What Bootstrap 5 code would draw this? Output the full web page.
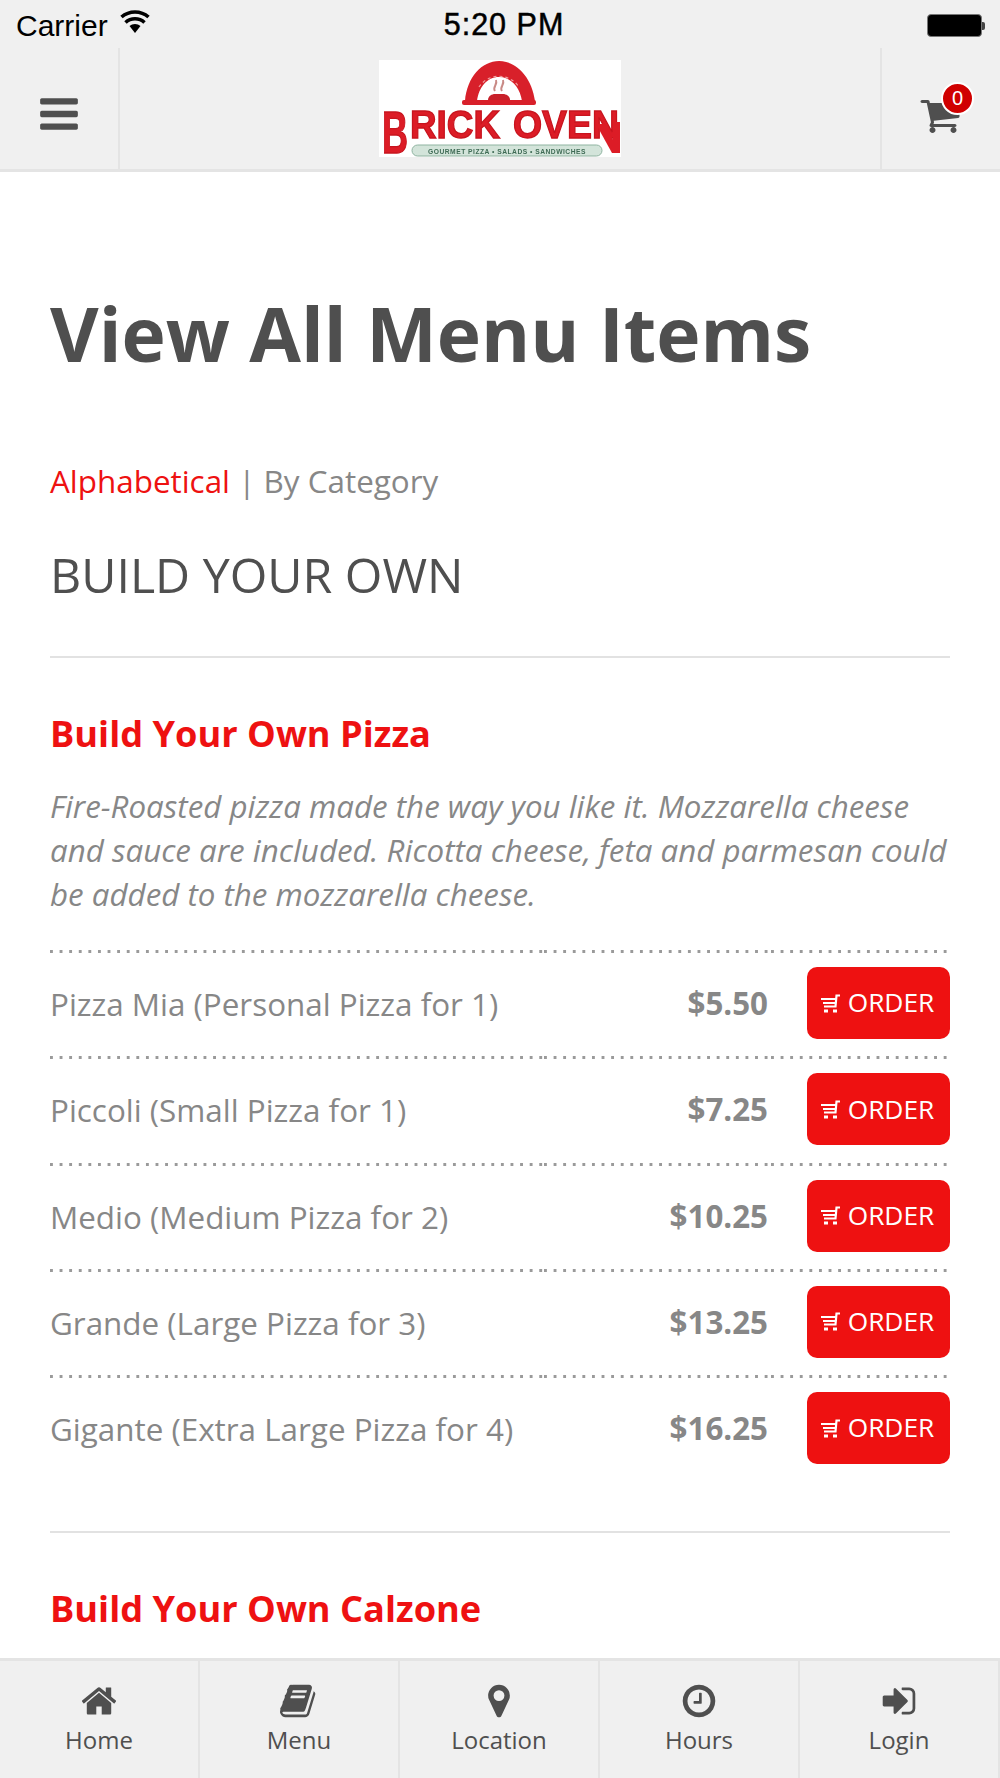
<!DOCTYPE html>
<html lang="en">
<head>
<meta charset="utf-8">
<title>View All Menu Items</title>
<link href="https://cdn.jsdelivr.net/npm/bootstrap@5.3.0/dist/css/bootstrap.min.css" rel="stylesheet">
<style>
html,body{height:1778px;overflow:hidden}
body{font-family:"Open Sans",sans-serif;color:#878787;background:#fff}
.app-shell{height:1778px}
.bar-bg{background:#f0f0f0}
.status-bar{height:48px;padding:2px 18px 0 16px;font-family:"Liberation Sans",sans-serif;color:#000;font-size:30px;position:relative}
.status-time{font-size:30.5px;-webkit-text-stroke:.5px #000;letter-spacing:1px;margin-left:4px}
.wifi-ic{width:32px;height:24px;margin-left:11px;margin-bottom:6px}
.batt{width:55px;height:23px;background:#000;border-radius:4px;border:1px solid #777;position:relative}
.batt::after{content:"";position:absolute;right:-4px;top:7px;width:3px;height:8px;background:#444;border-radius:0 2px 2px 0}
.top-nav{height:124px;border-bottom:3px solid #e4e4e4}
.nav-side{width:120px;border-right:2px solid #e4e4e4;padding-top:11px}
.nav-side-r{width:120px;border-left:2px solid #e4e4e4;position:relative}
.ic-dark{fill:#4f4f4f}
.logo-box{width:242px;height:97px;background:#fff;display:block}
.logo-svg{filter:blur(.7px);display:block;overflow:visible}
.logo-txt{font-family:"Liberation Sans",sans-serif;font-weight:700;fill:#dc1c26;stroke:#c8141e;stroke-width:1.300px}
.logo-tag{font-family:"Liberation Sans",sans-serif;font-weight:700;font-size:6.700px;fill:#3f6b55;text-anchor:middle;letter-spacing:.5px}
.cart-icon{left:37px;top:46px}
.cart-badge{position:absolute;top:34px;left:59px;width:33px;height:33px;border-radius:50%;background:#d00000;border:2px solid #fff;color:#fff;font-size:20px;line-height:29px;text-align:center;font-family:"Liberation Sans",sans-serif}
.page-main{padding:0 50px;overflow:hidden}
.page-title{font-size:74.9px;font-weight:700;color:#4f4f4f;margin:112px 0 0;line-height:98px}
.sort-line{font-size:31.4px;line-height:44px;margin-top:77px}
.sort-line a{color:#ee1111;text-decoration:none}
.cat-title{font-size:48.3px;font-weight:400;color:#4f4f4f;margin:38px 0 0;line-height:66px}
.rule{border-top:2px solid #e2e2e2;opacity:1;margin:0}
.section-a{margin-top:49px}
.section-b{margin-top:50px}
.item-title{font-size:36.2px;font-weight:700;color:#ee1111;line-height:50px;margin:50px 0 0}
.item-b{margin-top:50px}
.item-desc{font-size:31.3px;font-style:italic;line-height:44px;margin:26px 0 34px}
.dots{background-image:linear-gradient(to right,#9a9a9a 3px,transparent 3px);background-size:9.6px 3px;background-repeat:repeat-x;background-position:0 0}
.row-item{height:106.25px}
.cell-name{width:494px;font-size:31.4px}
.cell-price{width:227px;font-size:31.3px;font-weight:700;justify-content:flex-end;padding-right:3px}
.cell-btn{width:179px;justify-content:flex-end;padding-top:17px;align-items:flex-start}
.cell-pad{padding-top:1px}
.btn-order{width:143px;height:72px;background:#ee1111;border:0;color:#fff;border-radius:10px;font-size:26.3px;padding:0 2px 0 0;display:flex;align-items:center;justify-content:center;gap:8px}
.btn-order:hover{background:#ee1111;color:#fff}
.bottom-nav{height:120px;border-top:3px solid #e4e4e4}
.tab-cell{width:200px;border-right:2px solid #e4e4e4;color:#4f4f4f;font-size:24px;line-height:34px;text-decoration:none;padding-top:20px}
.tab-ic{height:42px}
</style>
</head>
<body>
<div class="app-shell d-flex flex-column">
  <header class="bar-bg flex-shrink-0">
    <div class="status-bar d-flex align-items-center justify-content-between">
      <div class="d-flex align-items-center"><span>Carrier</span>
        <svg class="wifi-ic" viewBox="0 0 30 24"><path d="M15 23l-5.500-7a8.500 8.500 0 0 1 11 0z" fill="#000"/><path d="M5.500 12.500a14 14 0 0 1 19 0M1.500 7a20.500 20.500 0 0 1 27 0" stroke="#000" stroke-width="3.600" fill="none"/></svg>
      </div>
      <span class="status-time position-absolute start-50 translate-middle-x">5:20 PM</span>
      <div class="batt"></div>
    </div>
    <div class="top-nav d-flex">
      <div class="nav-side d-flex align-items-center justify-content-center">
        <svg width="44" height="44" viewBox="0 0 1792 1792" class="ic-dark"><path d="M1664 1344v128q0 26-19 45t-45 19h-1408q-26 0-45-19t-19-45v-128q0-26 19-45t45-19h1408q26 0 45 19t19 45zm0-512v128q0 26-19 45t-45 19h-1408q-26 0-45-19t-19-45v-128q0-26 19-45t45-19h1408q26 0 45 19t19 45zm0-512v128q0 26-19 45t-45 19h-1408q-26 0-45-19t-19-45v-128q0-26 19-45t45-19h1408q26 0 45 19t19 45z"/></svg>
      </div>
      <div class="flex-grow-1 d-flex align-items-center justify-content-center">
        <div class="logo-box">
          <svg class="logo-svg" width="242" height="97" viewBox="0 0 242 97">
            <path d="M86 41C88 17 103 1 120 1s33 16 36 40h-13c-2-14-11-24-23-24s-20 10-22 24z" fill="#d8202a"/>
            <path d="M100 27a24 24 0 0 1 40 0" fill="none" stroke="#f0a0a0" stroke-width="1.200" stroke-dasharray="3 3"/>
            <rect x="83" y="40" width="74" height="5" rx="2" fill="#d8202a"/>
            <path d="M109 40c0-4 4-6 7-6h8c3 0 7 2 7 6z" fill="#c8202a"/>
            <path d="M116 31c-3-4 3-6 1-11M123 31c-3-4 3-6 1-11" stroke="#c98a86" stroke-width="2" fill="none"/>
            <text class="logo-txt" transform="translate(3 93) scale(.6 1)" font-size="60">B</text>
            <text class="logo-txt" transform="translate(31 78) scale(.945 1)" font-size="39">RICK</text>
            <text class="logo-txt" transform="translate(134 78) scale(.96 1)" font-size="39">OVEN</text>
            <path d="M217 64l16 29h8l-15-29z" fill="#dc1c26"/>
            <rect x="234" y="62" width="7" height="31" fill="#dc1c26"/>
            <rect x="33" y="85" width="190" height="11" rx="5.500" fill="#d3e4da" stroke="#8fb3a0"/>
            <text class="logo-tag" x="128" y="93.500">GOURMET PIZZA • SALADS • SANDWICHES</text>
          </svg>
        </div>
      </div>
      <div class="nav-side-r">
        <svg class="cart-icon position-absolute" width="42" height="42" viewBox="0 0 1792 1792" fill="#4f4f4f"><path d="M704 1536q0 52-38 90t-90 38-90-38-38-90 38-90 90-38 90 38 38 90zm896 0q0 52-38 90t-90 38-90-38-38-90 38-90 90-38 90 38 38 90zm128-1088v512q0 24-16.500 42.500t-40.500 21.500l-1044 122q13 60 13 70 0 16-24 64h920q26 0 45 19t19 45-19 45-45 19h-1024q-26 0-45-19t-19-45q0-11 8-31.500t16-36 21.500-40 15.500-29.500l-177-823h-204q-26 0-45-19t-19-45 19-45 45-19h256q16 0 28.500 6.500t19.500 15.500 13 24.500 8 26 5.500 29.500 4.500 26h1201q26 0 45 19t19 45z"/></svg>
        <span class="cart-badge">0</span>
      </div>
    </div>
  </header>

  <main class="page-main flex-grow-1">
    <h1 class="page-title">View All Menu Items</h1>
    <p class="sort-line mb-0"><a href="#">Alphabetical</a> | By Category</p>
    <h2 class="cat-title">BUILD YOUR OWN</h2>
    <hr class="rule section-a">
    <h3 class="item-title item-a">Build Your Own Pizza</h3>
    <p class="item-desc desc-a">Fire-Roasted pizza made the way you like it. Mozzarella cheese and sauce are included. Ricotta cheese, feta and parmesan could be added to the mozzarella cheese.</p>

    <div class="menu-list">
      <div class="row-item d-flex">
        <div class="cell-name dots cell-pad d-flex align-items-center">Pizza Mia (Personal Pizza for 1)</div>
        <div class="cell-price dots cell-pad d-flex align-items-center">$5.50</div>
        <div class="cell-btn dots d-flex"><button class="btn btn-order"><svg width="19" height="19" viewBox="0 0 19 19" fill="none" stroke="#fff" stroke-width="2.200"><path d="M19 1.500h-3.500l-1 11H3M0 5h15M2 9h12.500"/><path d="M3 17h4M12 17h4" stroke-width="3"/></svg>ORDER</button></div>
      </div>
      <div class="row-item d-flex">
        <div class="cell-name dots cell-pad d-flex align-items-center">Piccoli (Small Pizza for 1)</div>
        <div class="cell-price dots cell-pad d-flex align-items-center">$7.25</div>
        <div class="cell-btn dots d-flex"><button class="btn btn-order"><svg width="19" height="19" viewBox="0 0 19 19" fill="none" stroke="#fff" stroke-width="2.200"><path d="M19 1.500h-3.500l-1 11H3M0 5h15M2 9h12.500"/><path d="M3 17h4M12 17h4" stroke-width="3"/></svg>ORDER</button></div>
      </div>
      <div class="row-item d-flex">
        <div class="cell-name dots cell-pad d-flex align-items-center">Medio (Medium Pizza for 2)</div>
        <div class="cell-price dots cell-pad d-flex align-items-center">$10.25</div>
        <div class="cell-btn dots d-flex"><button class="btn btn-order"><svg width="19" height="19" viewBox="0 0 19 19" fill="none" stroke="#fff" stroke-width="2.200"><path d="M19 1.500h-3.500l-1 11H3M0 5h15M2 9h12.500"/><path d="M3 17h4M12 17h4" stroke-width="3"/></svg>ORDER</button></div>
      </div>
      <div class="row-item d-flex">
        <div class="cell-name dots cell-pad d-flex align-items-center">Grande (Large Pizza for 3)</div>
        <div class="cell-price dots cell-pad d-flex align-items-center">$13.25</div>
        <div class="cell-btn dots d-flex"><button class="btn btn-order"><svg width="19" height="19" viewBox="0 0 19 19" fill="none" stroke="#fff" stroke-width="2.200"><path d="M19 1.500h-3.500l-1 11H3M0 5h15M2 9h12.500"/><path d="M3 17h4M12 17h4" stroke-width="3"/></svg>ORDER</button></div>
      </div>
      <div class="row-item d-flex">
        <div class="cell-name dots cell-pad d-flex align-items-center">Gigante (Extra Large Pizza for 4)</div>
        <div class="cell-price dots cell-pad d-flex align-items-center">$16.25</div>
        <div class="cell-btn dots d-flex"><button class="btn btn-order"><svg width="19" height="19" viewBox="0 0 19 19" fill="none" stroke="#fff" stroke-width="2.200"><path d="M19 1.500h-3.500l-1 11H3M0 5h15M2 9h12.500"/><path d="M3 17h4M12 17h4" stroke-width="3"/></svg>ORDER</button></div>
      </div>
    </div>
    <hr class="rule section-b">
    <h3 class="item-title item-b">Build Your Own Calzone</h3>
  </main>

  <nav class="bar-bg bottom-nav d-flex flex-shrink-0">
    <a href="#" class="tab-cell d-flex flex-column align-items-center">
      <span class="tab-ic"><svg width="38" height="38" viewBox="0 0 1792 1792" fill="#4f4f4f"><path d="M1472 992v480q0 26-19 45t-45 19h-384v-384h-256v384h-384q-26 0-45-19t-19-45v-480q0-1 .5-3t.5-3l575-474 575 474q1 2 1 6zm223-69l-62 74q-8 9-21 11h-3q-13 0-21-7l-692-577-692 577q-12 8-24 7-13-2-21-11l-62-74q-8-10-7-23.500t11-21.500l719-599q32-26 76-26t76 26l244 204v-195q0-14 9-23t23-9h192q14 0 23 9t9 23v408l219 182q10 8 11 21.500t-7 23.500z"/></svg></span>Home</a>
    <a href="#" class="tab-cell d-flex flex-column align-items-center">
      <span class="tab-ic"><svg width="38" height="38" viewBox="0 0 1792 1792" fill="#4f4f4f"><path d="M1639 478q40 57 18 129l-275 906q-19 64-76.500 107.500t-122.500 43.500h-923q-77 0-148.500-53.500t-99.500-131.500q-24-67-2-127 0-4 3-27t4-37q1-8-3-21.500t-3-19.500q2-11 8-21t16.500-23.500 16.500-23.500q23-38 45-91.500t30-91.500q3-10 .5-30t-.5-28q3-11 17-28t17-23q21-36 42-92t25-90q1-9-2.500-32t.5-28q4-13 22-30.500t22-22.500q19-26 42.500-84.500t27.500-96.500q1-8-3-25.500t-2-26.500q2-8 9-18t18-23 17-21q8-12 16.500-30.500t15-35 16-36 19.500-32 26.500-23.500 36-11.500 47.500 5.500l-1 3q38-9 51-9h761q74 0 114 56t18 130l-274 906q-36 119-71.500 153.500t-128.500 34.500h-869q-27 0-38 15-11 16-1 43 24 70 144 70h923q29 0 56-15.500t35-41.500l300-987q7-22 5-57 38 15 59 43zm-1064 2q-4 13 2 22.500t20 9.500h608q13 0 25.500-9.500t16.500-22.500l21-64q4-13-2-22.500t-20-9.500h-608q-13 0-25.500 9.500t-16.500 22.500zm-83 256q-4 13 2 22.500t20 9.500h608q13 0 25.500-9.500t16.500-22.500l21-64q4-13-2-22.500t-20-9.500h-608q-13 0-25.500 9.500t-16.500 22.500z"/></svg></span>Menu</a>
    <a href="#" class="tab-cell d-flex flex-column align-items-center">
      <span class="tab-ic"><svg width="38" height="38" viewBox="0 0 1792 1792" fill="#4f4f4f"><path d="M1152 640q0-106-75-181t-181-75-181 75-75 181 75 181 181 75 181-75 75-181zm256 0q0 109-33 179l-364 774q-16 33-47.500 52t-67.500 19-67.500-19-46.500-52l-365-774q-33-70-33-179 0-212 150-362t362-150 362 150 150 362z"/></svg></span>Location</a>
    <a href="#" class="tab-cell d-flex flex-column align-items-center">
      <span class="tab-ic"><svg width="38" height="38" viewBox="0 0 1792 1792" fill="#4f4f4f"><path d="M1024 544v448q0 14-9 23t-23 9h-320q-14 0-23-9t-9-23v-64q0-14 9-23t23-9h224v-352q0-14 9-23t23-9h64q14 0 23 9t9 23zm416 352q0-148-73-273t-198-198-273-73-273 73-198 198-73 273 73 273 198 198 273 73 273-73 198-198 73-273zm224 0q0 209-103 385.500t-279.500 279.500-385.500 103-385.500-103-279.500-279.500-103-385.500 103-385.500 279.500-279.500 385.500-103 385.500 103 279.500 279.500 103 385.500z"/></svg></span>Hours</a>
    <a href="#" class="tab-cell d-flex flex-column align-items-center">
      <span class="tab-ic"><svg width="38" height="38" viewBox="0 0 1792 1792" fill="#4f4f4f"><path d="M1312 896q0 26-19 45l-544 544q-19 19-45 19t-45-19-19-45v-288h-448q-26 0-45-19t-19-45v-384q0-26 19-45t45-19h448v-288q0-26 19-45t45-19 45 19l544 544q19 19 19 45zm352-352v704q0 119-84.500 203.500t-203.500 84.500h-320q-13 0-22.500-9.500t-9.500-22.500q0-4-1-20t-.5-26.500 3-23.500 10-19.500 20.500-6.500h320q66 0 113-47t47-113v-704q0-66-47-113t-113-47h-312l-11.500-1-11.500-3-8-5.500-7-9-2-13.500q0-4-1-20t-.5-26.500 3-23.500 10-19.500 20.500-6.500h320q119 0 203.500 84.500t84.500 203.500z"/></svg></span>Login</a>
  </nav>
</div>
</body>
</html>
